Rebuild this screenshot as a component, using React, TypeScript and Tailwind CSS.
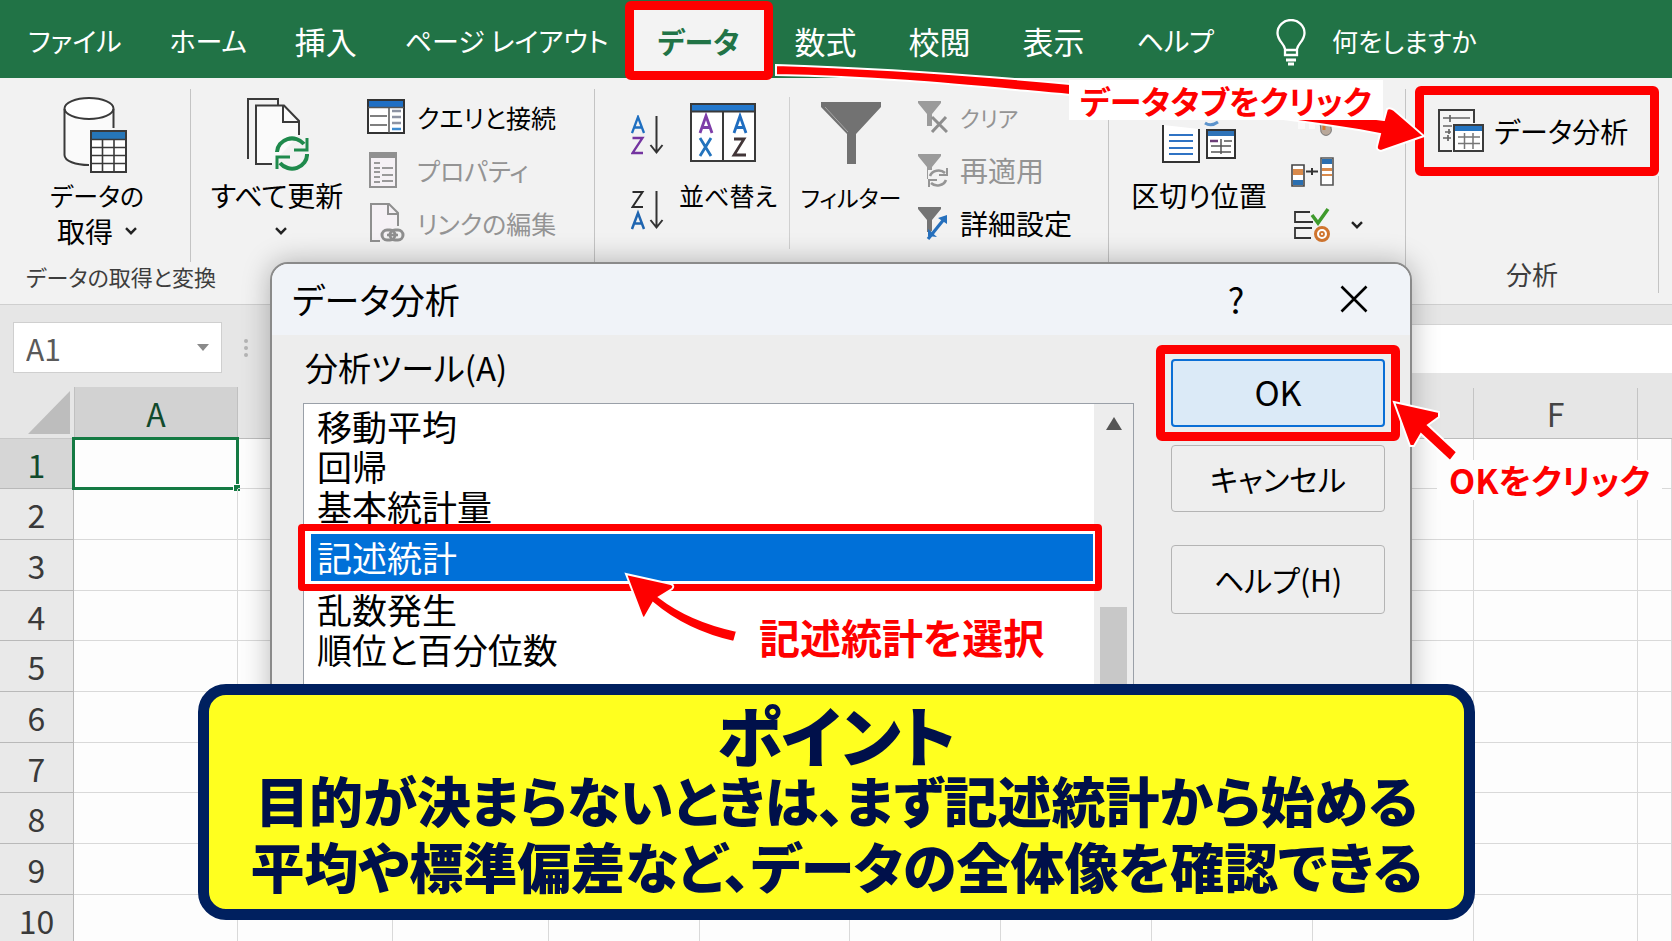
import React from "react";

function Chevron() {
  return (
    <svg width="12" height="8" viewBox="0 0 12 8" fill="none" stroke="#222" strokeWidth="2.4" aria-hidden="true">
      <path d="M1 1.2 6 6.2 11 1.2" />
    </svg>
  );
}

function DatabaseIcon() {
  return (
    <svg width="64" height="76" viewBox="0 0 64 76" fill="none" stroke="#3a3a3a" strokeWidth="2" className="mr-1" aria-hidden="true">
      <path d="M1.5 12v47c0 5 11 9.500 26 9.500L50 60V12z" fill="#fafafa" stroke="none" />
      <ellipse cx="26" cy="11.500" rx="24.500" ry="10.500" fill="#fff" />
      <path d="M1.500 12v46c0 6 11 10 24.500 10M50.500 12v19" />
      <rect x="28" y="34" width="35" height="41" fill="#fff" />
      <path d="M29 35h33v7H29z" fill="#2676b8" stroke="none" />
      <path d="M28 42.500h35M28 50.500h35M28 58.500h35M28 66.500h35M39.500 43v32M51 43v32" strokeWidth="1.600" />
    </svg>
  );
}

function RefreshAllIcon() {
  return (
    <svg width="64" height="76" viewBox="0 0 64 76" fill="none" stroke="#3a3a3a" strokeWidth="2" aria-hidden="true">
      <path d="M3 62V2h30v6" />
      <path d="M27 67H11V8.500h28L54 24v14" fill="#fafafa" />
      <path d="M38 9v16h16" />
      <g stroke="#1f8a4c" strokeWidth="4">
        <path d="M32 55a15 14 0 0 1 27-8M62 57a15 14 0 0 1-27 9" />
        <path d="M62 41v12H49M32 72V60h13" strokeWidth="3" />
      </g>
    </svg>
  );
}

function QueryIcon() {
  return (
    <svg width="38" height="36" viewBox="0 0 38 36" fill="none" aria-hidden="true">
      <rect x="1" y="1" width="36" height="33" fill="#fff" stroke="#333" strokeWidth="2" />
      <path d="M2 2h34v6H2z" fill="#1f6fc4" />
      <path d="M1 8.500h36M22 8v26M3 17h17M3 26h17" stroke="#555" strokeWidth="1.500" />
      <path d="M25 12h9M25 18h9M25 24h9" stroke="#8d93a3" strokeWidth="2.500" />
      <path d="M25 30h9" stroke="#3e8bd0" strokeWidth="2.500" />
    </svg>
  );
}

function PropertiesIcon() {
  return (
    <svg width="38" height="36" viewBox="0 0 38 36" fill="none" aria-hidden="true">
      <rect x="3" y="1" width="26" height="34" fill="#f5f1f5" stroke="#909090" strokeWidth="2" />
      <path d="M3 1h26v5H3z" fill="#909090" />
      <path d="M7 11h6M7 16h6M7 20h6M7 25h6M7 30h6M15 16h11M15 23h11M15 29h11" stroke="#999" strokeWidth="1.800" />
    </svg>
  );
}

function EditLinksIcon() {
  return (
    <svg width="38" height="40" viewBox="0 0 38 40" fill="none" stroke="#8f8f8f" strokeWidth="2" aria-hidden="true">
      <path d="M13 38H4V1h18l9 9v13" fill="#f5f1f5" />
      <path d="M21 1v10h10" />
      <g strokeWidth="3">
        <rect x="15" y="27" width="13" height="10" rx="5" />
        <rect x="23" y="27" width="13" height="10" rx="5" />
      </g>
      <path d="M20 32h11" strokeWidth="2.500" />
    </svg>
  );
}

function SortOrderIcon({ descending }: { descending?: boolean }) {
  return (
    <svg width="34" height="40" viewBox="0 0 34 40" fill="none" strokeWidth="2" aria-hidden="true">
      {descending ? (
        <>
          <path d="M1.500 2h10L1.500 17H12" stroke="#2b2b2b" />
          <path d="M1 39 7 23l6 16M3 33.500h8" stroke="#1f65b0" strokeWidth="2.500" />
        </>
      ) : (
        <>
          <path d="M1 18 7 2l6 16M3 12.500h8" stroke="#1f6fc0" strokeWidth="2.300" />
          <path d="M1.500 23h10L1.500 38H12" stroke="#7434a0" strokeWidth="2.300" />
        </>
      )}
      <path d="M25.500 1v36M19.500 30l6 7.500 6-7.500" stroke="#333" />
    </svg>
  );
}

function SortIcon() {
  return (
    <svg width="66" height="60" viewBox="0 0 66 60" fill="none" className="mr-[10px]" aria-hidden="true">
      <rect x="1" y="1" width="64" height="57" fill="#fff" stroke="#3a3a3a" strokeWidth="2" />
      <path d="M2 2h62v6H2z" fill="#2478cc" />
      <path d="M1 8.500h64M33 8v50" stroke="#3a3a3a" strokeWidth="2" />
      <g strokeWidth="2.800">
        <path d="M10 30 16 13l6 17M12 24.500h8" stroke="#7e3da8" />
        <path d="M10 35 21 53M21 35 10 53" stroke="#2373bd" />
        <path d="M44 30 50 13l6 17M46 24.500h8" stroke="#1f6dc0" />
        <path d="M44 36h10L44 52h12" stroke="#423638" />
      </g>
    </svg>
  );
}

function FilterIcon() {
  return (
    <svg width="60" height="64" viewBox="0 0 60 64" aria-hidden="true">
      <path d="M0 1h60v5L35 33v30h-9V33L0 6z" fill="#727272" />
      <path d="M4 6 27 31" stroke="#a5a5a5" strokeWidth="1" />
    </svg>
  );
}

function SmallFilterIcon({ kind }: { kind: "clear" | "reapply" | "advanced" }) {
  const tone = kind === "advanced" ? "#747474" : "#9b9b9b";
  return (
    <svg width="30" height="34" viewBox="0 0 30 34" fill="none" aria-hidden="true">
      <path d="M0 1h23v2l-9 11v12H9V14L0 3z" fill={tone} />
      {kind === "clear" && <path d="M14 17 29 32M28 17 14 32" stroke="#8e8e8e" strokeWidth="3" />}
      {kind === "reapply" && (
        <g>
          <path d="M10 17h20v17H10z" fill="#f2f2f2" />
          <path d="M12 23a9 8 0 0 1 15-3M28 27a9 8 0 0 1-15 3" stroke="#959595" strokeWidth="2.600" />
          <path d="M29 15v7h-8M11 34v-7h8" stroke="#959595" strokeWidth="2" />
        </g>
      )}
      {kind === "advanced" && (
        <g>
          <path d="M11 33 27 13" stroke="#f2f2f2" strokeWidth="6" />
          <path d="M10 33 27 12" stroke="#2670bd" strokeWidth="3.200" />
          <path d="M29 9v9l-9-6zM10 23v7l9 1z" fill="#2670bd" />
        </g>
      )}
    </svg>
  );
}

function TextToColumnsIcon() {
  return (
    <svg width="76" height="60" viewBox="0 0 76 60" fill="none" aria-hidden="true">
      <path d="M2 22v37h36V26" fill="#fff" stroke="#333" strokeWidth="2" />
      <path d="M8 32h24M8 38h24M8 45h24M8 51h24" stroke="#2f73c4" strokeWidth="1.800" />
      <path d="M44 20q6 4 13-1" stroke="#5c93cc" strokeWidth="3" />
      <rect x="46" y="27" width="28" height="28" fill="#fff" stroke="#333" strokeWidth="2" />
      <path d="M47 28h26v5H47z" fill="#2f73b8" />
      <path d="M49 38h8" stroke="#6c3c78" strokeWidth="2.500" />
      <path d="M50 43h20M50 49h20M60 36v15M63 38h8" stroke="#555" strokeWidth="1.500" />
    </svg>
  );
}

function FlashFillIcon() {
  return (
    <svg width="44" height="34" viewBox="0 0 44 34" fill="none" aria-hidden="true">
      <path d="M7 19h7v8H7zM18 19h6v8h-6z" fill="#fafafa" />
      <path d="M29 20h11v6a5 5 0 0 1-10 4z" fill="#b9a89a" stroke="#777" />
      <path d="M33 20v8" stroke="#d9782f" strokeWidth="3" />
    </svg>
  );
}

function ConsolidateIcon() {
  return (
    <svg width="44" height="30" viewBox="0 0 44 30" fill="none" aria-hidden="true">
      <path d="M1 8h12v21H1z" fill="#fff" stroke="#444" strokeWidth="1.600" />
      <path d="M2 12h10v6H2z" fill="#d98a4b" />
      <path d="M2 23h10v5H2z" fill="#2b6fb0" />
      <path d="M15 14.500h12M21 11v7" stroke="#333" strokeWidth="2" />
      <path d="M30 1h12v27H30z" fill="#fff" stroke="#555" strokeWidth="1.600" />
      <path d="M31 2h10v5H31z" fill="#2b6fb0" />
      <path d="M31 11h10v3H31zM31 17h10v2H31z" fill="#d98a4b" />
    </svg>
  );
}

function ValidationIcon() {
  return (
    <svg width="44" height="38" viewBox="0 0 44 38" fill="none" aria-hidden="true">
      <path d="M19 6H4v10h18M21 22H4v10h16" stroke="#333" strokeWidth="1.800" />
      <path d="m21 9 6 8L37 3" stroke="#3f9a2c" strokeWidth="3.500" />
      <circle cx="31" cy="28" r="6.500" fill="#fff" stroke="#d0752f" strokeWidth="3" />
      <circle cx="31" cy="28" r="2" stroke="#d0752f" strokeWidth="1.800" />
    </svg>
  );
}

function AnalysisIcon() {
  return (
    <svg width="46" height="44" viewBox="0 0 46 44" fill="none" aria-hidden="true">
      <path d="M36 14V1H1v41h13" fill="#f6f6f6" stroke="#3c3c3c" strokeWidth="2" />
      <path d="M5 9h27M12 6v7M5 17h9M7 23h6M11 20v5M5 29h8M10 26v6" stroke="#666" strokeWidth="1.700" />
      <rect x="16" y="16" width="29" height="26" fill="#fff" stroke="#3c3c3c" strokeWidth="2" />
      <path d="M17 17h27v5H17z" fill="#2474c0" />
      <path d="M20 28h22M20 34.500h22M26.500 24v16M35 24v16" stroke="#777" strokeWidth="1.500" />
    </svg>
  );
}

const leftTab = "flex h-[78px] shrink-0 items-center px-6 pt-[3px] text-white";
const rightTab = "flex h-[78px] shrink-0 items-center px-[26px] pt-[3px] text-white";

function Header() {
  return (
    <nav className="flex h-[78px] items-start bg-[#217346] pl-1 text-[31px] leading-[40px] whitespace-nowrap">
      <button className={`${leftTab} text-[27px]`}>ファイル</button>
      <button className={`${leftTab} text-[27px]`}>ホーム</button>
      <button className={leftTab}>挿入</button>
      <button className={`${leftTab} text-[27px]`}>ページ レイアウト</button>
      <button className="z-10 mt-px -ml-2 flex h-[79px] w-[148px] shrink-0 items-center justify-center rounded-md border-[9px] border-[#fe0000] bg-[#f3f3f3] text-[29px] font-bold text-[#217346]">
        データ
      </button>
      <button className={`-ml-1 ${rightTab}`}>数式</button>
      <button className={rightTab}>校閲</button>
      <button className={rightTab}>表示</button>
      <button className={`${rightTab} text-[27px]`}>ヘルプ</button>
      <button className="ml-9 flex h-[78px] shrink-0 items-center gap-[26px] pt-[3px] text-[26px] text-white">
        <svg width="30" height="48" viewBox="0 0 30 48" fill="none" stroke="#fff" strokeWidth="2.300" className="mt-1" aria-hidden="true">
          <path d="M9 36v-6C8 24 1.500 22 1.500 14a13.500 13 0 0 1 27 0c0 8-6.500 10-7.500 16v6zM9 31h12" />
          <path d="M10 41h10M12 45h6" strokeWidth="3" />
        </svg>
        何をしますか
      </button>
    </nav>
  );
}

function ListCommand({ icon, children, muted }: { icon: React.ReactNode; children: React.ReactNode; muted?: boolean }) {
  return (
    <button className={`flex h-[53px] items-center gap-3 ${muted ? "text-[#949494]" : "text-black"}`}>
      {icon}
      {children}
    </button>
  );
}

function Ribbon() {
  return (
    <section className="flex h-[227px] border-b border-[#cfcfcf] bg-[#f2f2f2] pt-[11px] text-[28px] leading-[36px] whitespace-nowrap text-black">
      <div className="flex w-[191px] shrink-0 flex-col">
        <button className="flex h-[173px] flex-col items-center border-r border-[#c4c4c4] pt-2 pl-1">
          <DatabaseIcon />
          <span className="mt-1 text-[25px]">データの</span>
          <span className="flex items-center gap-3">
            取得 <Chevron />
          </span>
        </button>
        <span className="pl-[26px] text-[22px] leading-[28px] text-[#3d3d3d]">データの取得と変換</span>
      </div>

      <div className="flex w-[404px] shrink-0 gap-[25px] border-r border-[#c4c4c4] pl-[21px]">
        <button className="flex w-[130px] flex-col items-center pt-2">
          <RefreshAllIcon />
          <span className="mt-1">すべて更新</span>
          <span className="flex h-9 items-center pl-2">
            <Chevron />
          </span>
        </button>
        <div className="flex flex-col pt-px text-[25px]">
          <ListCommand icon={<QueryIcon />}>クエリと接続</ListCommand>
          <ListCommand icon={<PropertiesIcon />} muted>プロパティ</ListCommand>
          <ListCommand icon={<EditLinksIcon />} muted>リンクの編集</ListCommand>
        </div>
      </div>

      <div className="flex w-[194px] shrink-0 gap-4 pl-9">
        <div className="flex flex-col gap-[35px] pt-[26px]">
          <button aria-label="昇順">
            <SortOrderIcon />
          </button>
          <button aria-label="降順">
            <SortOrderIcon descending />
          </button>
        </div>
        <button className="flex w-[94px] flex-col items-center pt-[14px] text-[25px]">
          <SortIcon />
          <span className="mt-[14px]">並べ替え</span>
        </button>
      </div>

      <div className="flex w-[320px] shrink-0 border-r border-[#c4c4c4]">
        <div className="mt-2 flex h-[152px] border-l border-[#d0d0d0] pl-3">
          <button className="flex w-[98px] flex-col items-center pt-1 text-[23px]">
            <FilterIcon />
            <span className="mt-[14px]">フィルター</span>
          </button>
        </div>
        <div className="flex flex-col pt-px pl-[18px]">
          <div className="text-[22px]">
            <ListCommand icon={<SmallFilterIcon kind="clear" />} muted>クリア</ListCommand>
          </div>
          <ListCommand icon={<SmallFilterIcon kind="reapply" />} muted>再適用</ListCommand>
          <ListCommand icon={<SmallFilterIcon kind="advanced" />}>詳細設定</ListCommand>
        </div>
      </div>

      <div className="flex w-[297px] shrink-0 gap-6 border-r border-[#c4c4c4] pl-[22px]">
        <button className="flex w-[136px] flex-col items-center pt-[14px]">
          <TextToColumnsIcon />
          <span className="mt-[14px]">区切り位置</span>
        </button>
        <div className="flex flex-col pt-[3px]">
          <button className="flex h-[53px] items-center" aria-label="フラッシュ フィル"><FlashFillIcon /></button>
          <button className="flex h-[53px] items-center" aria-label="統合"><ConsolidateIcon /></button>
          <button className="flex h-[53px] items-center gap-4" aria-label="データの入力規則">
            <ValidationIcon />
            <Chevron />
          </button>
        </div>
      </div>

      <div className="flex w-[253px] shrink-0 flex-col items-end">
        <button className="-mt-[3px] flex h-[90px] w-[244px] items-center gap-[10px] rounded-md border-[9px] border-[#fe0000] pl-[14px]">
          <AnalysisIcon />
          データ分析
        </button>
        <div className="flex h-[117px] w-full items-end justify-center border-r border-[#c4c4c4]">
          <span className="pb-px text-[26px] text-[#3d3d3d]">分析</span>
        </div>
      </div>
    </section>
  );
}

function FormulaRow() {
  return (
    <div className="flex h-[68px] items-end bg-[#e6e6e6] pl-[13px]">
      <div className="flex h-[51px] w-[209px] shrink-0 items-center border border-[#cfcfcf] bg-white">
        <input
          aria-label="名前ボックス"
          defaultValue="A1"
          className="w-full min-w-0 bg-transparent pl-3 text-[30px] leading-[36px] text-[#5a5a5a] outline-none"
        />
        <svg width="12" height="8" viewBox="0 0 12 8" className="mr-3 shrink-0" aria-hidden="true">
          <path d="M0 0h12L6 7z" fill="#8a8a8a" />
        </svg>
      </div>
      <svg width="6" height="22" viewBox="0 0 6 22" className="mr-16 mb-[14px] ml-[21px] shrink-0" fill="#b5b5b5" aria-hidden="true">
        <circle cx="3" cy="4" r="2" />
        <circle cx="3" cy="11" r="2" />
        <circle cx="3" cy="18" r="2" />
      </svg>
      <input aria-label="数式バー" className="h-[49px] min-w-0 flex-1 border-t border-[#d5d5d5] bg-white outline-none" />
    </div>
  );
}

const columns = ["A", "", "", "", "", "", "", "", "", "F", ""];
const rows = [1, 2, 3, 4, 5, 6, 7, 8, 9, 10];

function Sheet() {
  return (
    <table className="w-full table-fixed border-separate border-spacing-0 bg-[#fdfdfd] text-[32px] leading-[40px]">
      <colgroup>
        <col className="w-[74px]" />
        <col className="w-[164px]" />
        <col className="w-[155px]" />
        <col className="w-[156px]" />
        <col className="w-[151px]" />
        <col className="w-[150px]" />
        <col className="w-[151px]" />
        <col className="w-[151px]" />
        <col className="w-[161px]" />
        <col className="w-[161px]" />
        <col className="w-[164px]" />
        <col />
      </colgroup>
      <thead>
        <tr className="h-[66px]">
          <th className="border-b border-[#c8c8c8] bg-[#e6e6e6] p-0 align-bottom">
            <svg width="43" height="43" viewBox="0 0 43 43" className="mb-1 ml-7" aria-hidden="true">
              <path d="M42 0v43H0z" fill="#bdbdbd" />
            </svg>
          </th>
          {columns.slice(0, 10).map((name, i) => (
            <th key={i} className="border-b border-[#bcbcbc] bg-[#e6e6e6] p-0 align-bottom font-normal">
              {i === 0 ? (
                <div className="flex h-[51px] items-center justify-center border-x border-[#c0c0c0] bg-[#d2d2d2] text-[#114a2c]">{name}</div>
              ) : (
                <div className="flex h-[50px] items-center justify-center border-r border-[#c4c4c4] text-[#444]">{name}</div>
              )}
            </th>
          ))}
          <th className="border-b border-[#bcbcbc] bg-[#e6e6e6] p-0" />
        </tr>
      </thead>
      <tbody>
        {rows.map((row) => (
          <tr key={row} className={row % 3 === 1 ? "h-[50px]" : "h-[51px]"}>
            <th
              scope="row"
              className={`border-r border-b border-[#b9b9b9] p-0 font-normal ${
                row === 1 ? "bg-[#d6d6d6] text-[#114a2c]" : "bg-[#e9e9e9] text-[#3a3a3a]"
              }`}
            >
              {row}
            </th>
            {columns.map((_, i) => (
              <td key={i} className="relative border-r border-b border-[#d9d9d9] p-0">
                {row === 1 && i === 0 && (
                  <div className="absolute -inset-x-[2px] -inset-y-[2px] border-[3px] border-[#147a43]">
                    <span className="absolute -right-1 -bottom-1 size-[7px] border-t border-l border-white bg-[#147a43]" />
                  </div>
                )}
              </td>
            ))}
          </tr>
        ))}
      </tbody>
    </table>
  );
}

const dialogButton = "w-full rounded-[4px] border border-[#b4b4b4] bg-[#eeeeee] pb-[2px] text-[30px]";

function AnalysisDialog() {
  return (
    <div
      role="dialog"
      aria-labelledby="dialog-title"
      className="absolute top-[262px] right-[260px] left-[270px] h-[500px] overflow-hidden rounded-t-[18px] border-2 border-[#8a8a8a] bg-[#ededed] text-[35px] leading-[40px] whitespace-nowrap text-black shadow-[0_0_28px_rgba(0,0,0,0.28)]"
    >
      <div className="flex h-[71px] items-center justify-between bg-[#f0f3f8] pr-[42px] pb-[2px] pl-5">
        <h2 id="dialog-title">データ分析</h2>
        <div className="flex items-center gap-[92px]">
          <button className="w-6" aria-label="ヘルプ">?</button>
          <button aria-label="閉じる">
            <svg width="28" height="28" viewBox="0 0 28 28" stroke="#000" strokeWidth="2.600" aria-hidden="true">
              <path d="M1.500 1.500 26.500 26.500M26.500 1.500 1.500 26.500" />
            </svg>
          </button>
        </div>
      </div>
      <div className="flex gap-[37px] pr-[25px] pl-[31px]">
        <div className="min-w-0 flex-1">
          <div id="tools-label" className="flex h-[68px] items-center pb-1 pl-[2px] text-[33px]">分析ツール(A)</div>
          <div className="flex h-[340px] border border-[#9aa0a8] bg-white">
            <ul role="listbox" aria-labelledby="tools-label" className="relative min-w-0 flex-1 pt-[2px]">
              <li role="option" aria-selected="false" className="pl-[13px]">移動平均</li>
              <li role="option" aria-selected="false" className="pl-[13px]">回帰</li>
              <li role="option" aria-selected="false" className="pl-[13px]">基本統計量</li>
              <li
                role="option"
                aria-selected="true"
                className="relative z-10 -my-[2px] -mr-2 -ml-[6px] flex h-[67px] rounded-[4px] border-[7px] border-[#fe0000] bg-white py-[3px] pr-[2px] pl-[6px] text-white"
              >
                <span className="flex flex-1 items-center bg-[#0070d8] pb-[2px] pl-[6px]">記述統計</span>
              </li>
              <li role="option" aria-selected="false" className="pl-[13px]">乱数発生</li>
              <li role="option" aria-selected="false" className="pl-[13px]">順位と百分位数</li>
              <li role="option" aria-selected="false" className="mt-3 pl-[13px]">共分散</li>
            </ul>
            <div className="flex w-[39px] shrink-0 flex-col items-center bg-[#ededed] pt-[13px]">
              <svg width="16" height="14" viewBox="0 0 16 14" aria-hidden="true">
                <path d="M8 0 16 13H0z" fill="#555" />
              </svg>
              <div className="mt-[176px] w-[27px] flex-1 bg-[#c8c8c8]" />
            </div>
          </div>
        </div>
        <div className="flex w-[214px] shrink-0 flex-col pt-[10px]">
          <div className="-mx-[15px] rounded-md border-[9px] border-[#fe0000] px-[6px] py-[5px]">
            <button className="h-[68px] w-full rounded-[4px] border-2 border-[#0a6fd6] bg-[#dbeaf7] pb-[2px] text-[34px]">OK</button>
          </div>
          <button className={`mt-1 h-[67px] ${dialogButton}`}>キャンセル</button>
          <button className={`mt-[33px] h-[69px] ${dialogButton}`}>ヘルプ(H)</button>
        </div>
      </div>
    </div>
  );
}

function Annotations() {
  return (
    <div className="pointer-events-none absolute inset-0 z-20 font-bold whitespace-nowrap text-[#fe0000]">
      <svg width="660" height="100" viewBox="0 0 660 100" className="absolute top-[60px] left-[770px]" aria-hidden="true">
        <path
          d="M6 5C200 11 420 34 614 60L617 49Q620 47 624 50L654 76 611 91Q606 90 607 86L610 74C560 64 420 46 300 35 200 26 120 17 6 15z"
          fill="#fe0000"
          stroke="#fff"
          strokeWidth="2"
        />
      </svg>
      <div className="absolute top-[80px] left-[1069px] bg-white px-[11px] text-[32px] leading-[40px]">データタブをクリック</div>

      <svg width="124" height="80" viewBox="0 0 124 80" className="absolute top-[568px] left-[620px]" aria-hidden="true">
        <path
          d="M6 6 51 16Q55 18 52 21L39 29Q70 53 117 63L114 74Q66 63 33 35L25 49Q23 51 22 48z"
          fill="#fe0000"
          stroke="#fff"
          strokeWidth="2"
        />
      </svg>
      <div className="absolute top-[608px] left-[759px] text-[41px] leading-[56px]">記述統計を選択</div>

      <svg width="70" height="66" viewBox="0 0 70 66" className="absolute top-[398px] left-[1390px]" aria-hidden="true">
        <path d="M4 4 49 14V19L38 27 67 54 60 63 31 36 24 48H20z" fill="#fe0000" stroke="#fff" strokeWidth="2" />
      </svg>
      <div className="absolute top-[460px] left-[1437px] bg-[#fdfdfd] px-3 text-[34px] leading-[40px]">OKをクリック</div>
    </div>
  );
}

function PointCallout() {
  return (
    <aside className="absolute top-[684px] right-[197px] left-[198px] z-30 flex h-[236px] flex-col items-center rounded-[28px] border-[11px] border-[#00205f] bg-[#ffff1f] font-black whitespace-nowrap text-[#00104a]">
      <h3 className="mt-1 text-[66px] leading-[68px]">ポイント</h3>
      <p className="text-center text-[54px] leading-[66px]">
        目的が決まらないときは、まず記述統計から始める
        <br />
        平均や標準偏差など、データの全体像を確認できる
      </p>
    </aside>
  );
}

export default function App() {
  return (
    <main className="relative h-screen overflow-hidden bg-[#e6e6e6] font-['Noto_Sans_CJK_JP',sans-serif] [font-feature-settings:'palt']">
      <Header />
      <Ribbon />
      <FormulaRow />
      <Sheet />
      <AnalysisDialog />
      <Annotations />
      <PointCallout />
    </main>
  );
}
